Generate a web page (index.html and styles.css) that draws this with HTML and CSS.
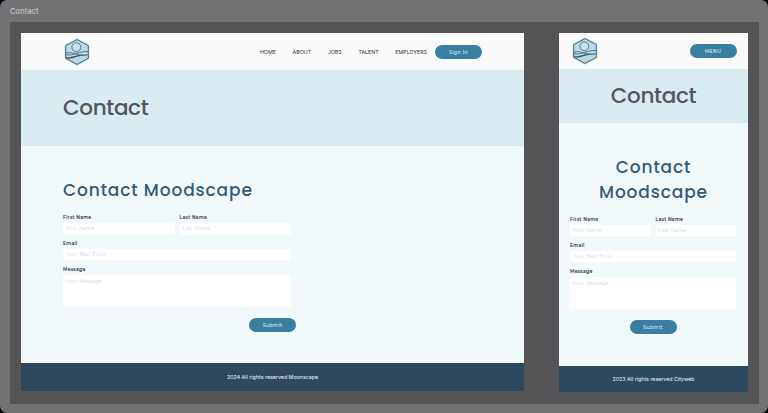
FILE: index.html
```html
<!DOCTYPE html>
<html lang="en">
<head>
<meta charset="utf-8">
<title>Contact</title>
<link rel="stylesheet" href="styles.css">
</head>
<body>
<svg width="0" height="0" class="defs" aria-hidden="true">
  <symbol id="logo" viewBox="0 0 28 30">
    <path d="M14 1 26.400 7.800v14.400L14 29 1.600 22.200V7.800z" fill="#c9e5ee"/>
    <path d="M14 2.600 25.300 8.700v12.600L14 27.400 2.700 21.300V8.700z" fill="#b9dae6" stroke="#3d5667" stroke-width=".9"/>
    <circle cx="13.300" cy="10.200" r="4.400" fill="#c5e1eb" stroke="#3d5667" stroke-width=".75"/>
    <path d="M2.700 16.200c3.500-1.200 6.500-.4 9.500.6s7 1.900 13.100.9" fill="none" stroke="#3d5667" stroke-width=".75"/>
    <path d="M2.700 17.800c9 1.200 13-4 22.600-3.200" fill="none" stroke="#3d5667" stroke-width=".75"/>
    <path d="M2.700 20.300c4.500.3 8-1.300 11.500-2.100s7.500-.7 11.100.5c-4.500-.5-7-.2-10.500.9-4 1.400-8 2.700-12.100 1.700z" fill="#3d5667"/>
  </symbol>
</svg>
<main class="canvas">
  <div class="canvas-title">Contact</div>
  <div class="board">
    <section class="page desktop">
      <header class="header">
        <svg class="logo"><use href="#logo"/></svg>
        <nav class="nav"><a>HOME</a><a>ABOUT</a><a>JOBS</a><a>TALENT</a><a>EMPLOYERS</a></nav>
        <button class="button">Sign In</button>
      </header>
      <div class="hero"><h1>Contact</h1></div>
      <div class="content">
        <h2>Contact Moodscape</h2>
        <form class="form">
          <div class="row">
            <div class="field"><label>First Name</label><div class="input">First Name</div></div>
            <div class="field"><label>Last Name</label><div class="input">Last Name</div></div>
          </div>
          <div class="field"><label>Email</label><div class="input">Your Best Email</div></div>
          <div class="field"><label>Message</label><div class="input area">Your Message</div></div>
          <button class="button submit" type="button">Submit</button>
        </form>
      </div>
      <footer class="footer">2024 All rights reserved Moonscape</footer>
    </section>
    <section class="page mobile">
      <header class="header">
        <svg class="logo"><use href="#logo"/></svg>
        <button class="button">MENU</button>
      </header>
      <div class="hero"><h1>Contact</h1></div>
      <div class="content">
        <h2>Contact<br>Moodscape</h2>
        <form class="form">
          <div class="row">
            <div class="field"><label>First Name</label><div class="input">First Name</div></div>
            <div class="field"><label>Last Name</label><div class="input">Last Name</div></div>
          </div>
          <div class="field"><label>Email</label><div class="input">Your Best Email</div></div>
          <div class="field"><label>Message</label><div class="input area">Your Message</div></div>
          <button class="button submit" type="button">Submit</button>
        </form>
      </div>
      <footer class="footer">2023 All rights reserved Cityweb</footer>
    </section>
  </div>
</main>
</body>
</html>
```
FILE: styles.css
```css
* { box-sizing: border-box; }
body { margin: 0; background: #000; font-family: Inter, sans-serif; }
h1, h2 { margin: 0; font-family: Poppins, Inter, sans-serif; font-weight: 500; white-space: nowrap; }
.defs { position: absolute; }
.canvas { width: 768px; height: 413px; padding: 0 9px 9px 10px; border-radius: 7px; background: #727274; overflow: hidden; }
.canvas-title { height: 22px; padding-top: 7px; font-size: 7.500px; line-height: 10px; letter-spacing: .12px; color: #d0d0d1; }
.board { display: flex; align-items: flex-start; gap: 35px; height: 382px; padding: 11px; background: #555557; }
.page { display: flex; flex-direction: column; background: #f1f9fb; }
.desktop { width: 503px; height: 357.500px; }
.mobile { width: 189px; height: 359px; }

.header { display: flex; align-items: center; height: 37px; padding: 0 42px; background: #fafafa; }
.mobile .header { height: 36px; padding: 0 11.500px 0 12px; justify-content: space-between; }
.logo { width: 28px; height: 30px; flex: none; }
.nav { display: flex; margin-left: auto; margin-right: 8px; gap: 16.700px; font-size: 5.300px; line-height: 8px; color: #303236; }
.button { width: 47px; height: 14px; padding: 0; border: 0; border-radius: 7px; background: #387fa2; color: #e3f0f5; font: 500 4.700px/14px Montserrat, Inter, sans-serif; letter-spacing: .38px; text-align: center; }

.hero { display: flex; align-items: center; height: 76px; padding-left: 42px; background: #daebf2; border-bottom: 1px solid #d5eaed; }
.hero h1 { font-size: 21.500px; line-height: 30px; letter-spacing: -.35px; color: #55565b; }
.mobile .hero { height: 54px; padding: 0; justify-content: center; }

.content { flex: 1; padding: 31px 42px 0; }
.content h2 { height: 26px; font-size: 17px; line-height: 26px; letter-spacing: .88px; color: #315b7a; }
.mobile .content { padding: 32px 11px 0; }
.mobile h2 { height: 50px; line-height: 25px; text-align: center; }
.form { display: flex; flex-direction: column; width: 228px; margin-top: 10px; }
.mobile .form { width: 166px; }
.row { display: flex; gap: 5px; }
.field { flex: 1 1 0; }
.form > .field { flex: none; }
label { display: block; height: 10px; font: 600 4.600px/9px Montserrat, Inter, sans-serif; letter-spacing: .25px; color: #25313b; }
.input { height: 11px; margin-bottom: 5px; padding-left: 3px; border-radius: 2px; background: #fff; color: #d0d4d8; font: 400 4.700px/11px Montserrat, Inter, sans-serif; letter-spacing: .25px; }
.area { height: 32px; margin-bottom: 11px; padding-top: 1px; }
.submit { align-self: flex-end; margin-right: -5px; }
.mobile .submit { align-self: center; margin-right: 0; }
.footer { height: 27.500px; background: #2d495e; color: #f2f6f8; font-size: 5.300px; line-height: 28px; text-align: center; }
.mobile .footer { height: 26.500px; line-height: 26px; }
```
